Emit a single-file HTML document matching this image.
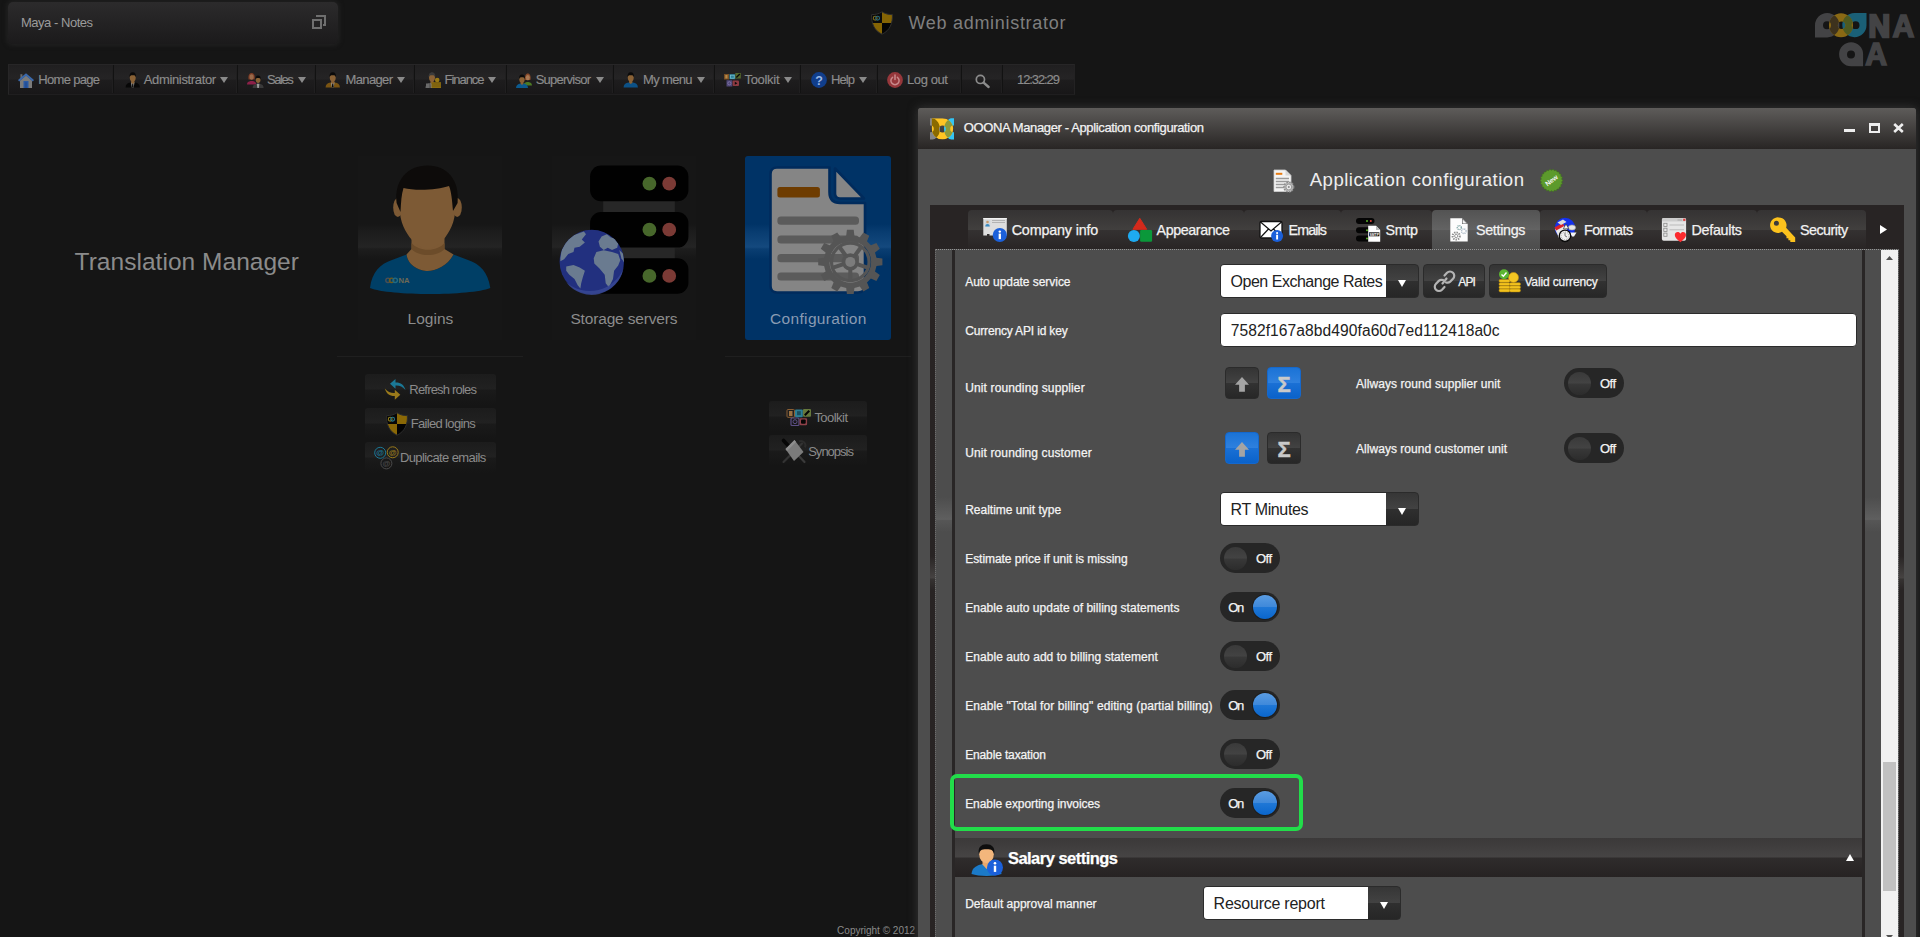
<!DOCTYPE html>
<html lang="en">
<head>
<meta charset="utf-8">
<title>Web administrator</title>
<style>
*{box-sizing:border-box;margin:0;padding:0}
html,body{width:1920px;height:937px;overflow:hidden;background:#151515}
body{font-family:"Liberation Sans",sans-serif;font-size:13px;color:#8f8f8f;position:relative}
.abs{position:absolute}
.t{position:absolute;white-space:nowrap;line-height:1}
.b{-webkit-text-stroke:.25px}
.g{-webkit-text-stroke:.15px}
svg{position:absolute;overflow:visible}
/* top area */
#notes{left:8px;top:2px;width:330px;height:42px;border-radius:5px;background:linear-gradient(#2c2b2c,#1b1a1b);box-shadow:0 0 5px 1px #242424}
#menu{left:8px;top:64px;width:1067px;height:31px;border:1px solid #272627;border-bottom-color:#1f1e1f;border-right-color:#232223;background:linear-gradient(#201f20 0%,#252425 49%,#1e1d1e 51%,#181718 100%)}
.sep{position:absolute;top:65px;width:2px;height:28px;background:linear-gradient(90deg,#201f20 50%,#121212 50%)}
.mi{top:73px;font-size:13px;color:#8d8d8d;letter-spacing:-.45px}
.arr{position:absolute;top:77px;width:0;height:0;border-left:4px solid transparent;border-right:4px solid transparent;border-top:6.5px solid #8a8a8a}
/* dialog */
#dlg{left:918px;top:108px;width:998px;height:840px;background:#4d4d4d;border-radius:3px 3px 0 0;box-shadow:0 0 10px 1px #323232}
#dtitle{left:0;top:0;width:998px;height:41px;border-radius:3px 3px 0 0;background:linear-gradient(#5e5c5a,#282524)}
#tabc{left:930px;top:205px;width:974px;height:740px;background:#282424}
#content{left:935px;top:249px;width:964px;height:700px;background:#4d4d4d;border:1px dotted #6e6e6e;border-top-color:#939393}
</style>
</head>
<body>
<div id="notes" class="abs"></div>
<div class="t" style="left:21.0px;top:16.0px;font-size:13px;color:#9b9b9b;letter-spacing:-0.48px;">Maya - Notes</div>
<svg style="left:312px;top:15px;" width="14" height="14" viewBox="0 0 14 14"><path d="M4 1h9v9h-2" fill="none" stroke="#6f6f6f" stroke-width="2"/><rect x="1" y="5" width="8" height="8" fill="none" stroke="#6f6f6f" stroke-width="2"/></svg>
<svg style="left:870px;top:11px;" width="24" height="24" viewBox="0 0 24 24"><defs><clipPath id="shc"><path d="M12 .8C9 3 5 3.6 1.6 3.6 1.2 12 4 19.5 12 23.2 20 19.5 22.8 12 22.4 3.6 19 3.6 15 3 12 .8z"/></clipPath></defs><g clip-path="url(#shc)"><rect width="12" height="12" fill="#0b0b0b"/><rect x="12" width="12" height="12" fill="#856404"/><rect y="12" width="12" height="12" fill="#856404"/><rect x="12" y="12" width="12" height="12" fill="#050505"/><circle cx="5.2" cy="7.2" r="1.9" fill="none" stroke="#7a6a1a" stroke-width="1.1"/><circle cx="7.6" cy="7.2" r="1.9" fill="none" stroke="#2a6a7a" stroke-width="1.1"/></g><path d="M12 .8C9 3 5 3.6 1.6 3.6 1.2 12 4 19.5 12 23.2 20 19.5 22.8 12 22.4 3.6 19 3.6 15 3 12 .8z" fill="none" stroke="#2e2e2e" stroke-width="1"/></svg>
<div class="t" style="left:908.5px;top:13.6px;font-size:18px;color:#7f7f7f;letter-spacing:0.70px;">Web administrator</div>
<svg style="left:1814.9px;top:12.8px;" width="101" height="54" viewBox="0 0 101 54"><title>OOONA QA</title><defs><clipPath id="lc1"><path d="M12.2 0A12.2 12.2 0 0 1 12.2 24.4H0V12.2A12.2 12.2 0 0 1 12.2 0zM12 8.2a4 4 0 1 0 0 8 4 4 0 0 0 0-8z" clip-rule="evenodd"/></clipPath><clipPath id="lc3"><path d="M39.4 0H51.5V12.2A12.1 12.1 0 1 1 39.4 0zM40.6 8.3a3.9 3.9 0 1 0 0 7.8 3.9 3.9 0 0 0 0-7.8z" clip-rule="evenodd"/></clipPath></defs><path d="M12.2 0A12.2 12.2 0 0 1 12.2 24.4H0V12.2A12.2 12.2 0 0 1 12.2 0zM12 8.2a4 4 0 1 0 0 8 4 4 0 0 0 0-8z" fill="#434345" fill-rule="evenodd"/><path d="M39.4 0H51.5V12.2A12.1 12.1 0 1 1 39.4 0zM40.6 8.3a3.9 3.9 0 1 0 0 7.8 3.9 3.9 0 0 0 0-7.8z" fill="#1a6077" fill-rule="evenodd"/><path d="M26 .2a12 12 0 1 0 0 24 12 12 0 0 0 0-24zM26.6 8.4a3.8 3.8 0 1 1 0 7.6 3.8 3.8 0 0 1 0-7.6z" fill="#8a6914" fill-rule="evenodd"/><path d="M26 .2a12 12 0 1 0 0 24 12 12 0 0 0 0-24zM26.6 8.4a3.8 3.8 0 1 1 0 7.6 3.8 3.8 0 0 1 0-7.6z" fill="#3d321d" fill-rule="evenodd" clip-path="url(#lc1)"/><path d="M26 .2a12 12 0 1 0 0 24 12 12 0 0 0 0-24zM26.6 8.4a3.8 3.8 0 1 1 0 7.6 3.8 3.8 0 0 1 0-7.6z" fill="#4f5a20" fill-rule="evenodd" clip-path="url(#lc3)"/><path d="M36.1 29.2a12 12 0 0 1 12 12V53.2H36.1a12 12 0 0 1 0-24zM36 37.4a4 4 0 1 0 0 8 4 4 0 0 0 0-8z" fill="#434345" fill-rule="evenodd"/><g font-family="Liberation Sans, sans-serif" font-weight="bold" font-size="32" fill="#434345" stroke="#434345" stroke-width="1.7" stroke-linejoin="miter"><text x="53.6" y="23.5" textLength="21.600" lengthAdjust="spacingAndGlyphs" stroke-width="2.600">N</text><text x="77.6" y="23.5" textLength="21.8" lengthAdjust="spacingAndGlyphs">A</text><text x="50.3" y="52.4" textLength="21.8" lengthAdjust="spacingAndGlyphs">A</text></g></svg>
<div id="menu" class="abs"></div>
<div class="sep" style="left:112px"></div>
<div class="sep" style="left:236px"></div>
<div class="sep" style="left:314px"></div>
<div class="sep" style="left:413px"></div>
<div class="sep" style="left:505px"></div>
<div class="sep" style="left:612px"></div>
<div class="sep" style="left:713px"></div>
<div class="sep" style="left:799px"></div>
<div class="sep" style="left:876px"></div>
<div class="sep" style="left:960px"></div>
<div class="sep" style="left:1001px"></div>
<div class="t g" style="left:38.3px;top:73.3px;font-size:13px;color:#8c8c8c;letter-spacing:-0.69px;">Home page</div>
<div class="t g" style="left:143.7px;top:73.3px;font-size:13px;color:#8c8c8c;letter-spacing:-0.34px;">Administrator</div>
<div class="arr" style="left:220px"></div>
<div class="t g" style="left:267.0px;top:73.3px;font-size:13px;color:#8c8c8c;letter-spacing:-1.45px;">Sales</div>
<div class="arr" style="left:298px"></div>
<div class="t g" style="left:345.5px;top:73.3px;font-size:13px;color:#8c8c8c;letter-spacing:-0.63px;">Manager</div>
<div class="arr" style="left:397px"></div>
<div class="t g" style="left:444.5px;top:73.3px;font-size:13px;color:#8c8c8c;letter-spacing:-1.04px;">Finance</div>
<div class="arr" style="left:488px"></div>
<div class="t g" style="left:535.7px;top:73.3px;font-size:13px;color:#8c8c8c;letter-spacing:-0.76px;">Supervisor</div>
<div class="arr" style="left:595.5px"></div>
<div class="t g" style="left:643.0px;top:73.3px;font-size:13px;color:#8c8c8c;letter-spacing:-0.66px;">My menu</div>
<div class="arr" style="left:696.5px"></div>
<div class="t g" style="left:744.5px;top:73.3px;font-size:13px;color:#8c8c8c;letter-spacing:-0.31px;">Toolkit</div>
<div class="arr" style="left:783.5px"></div>
<div class="t g" style="left:831.0px;top:73.3px;font-size:13px;color:#8c8c8c;letter-spacing:-0.91px;">Help</div>
<div class="arr" style="left:859.3px"></div>
<div class="t g" style="left:907.0px;top:73.3px;font-size:13px;color:#8c8c8c;letter-spacing:-0.40px;">Log out</div>
<div class="t g" style="left:1017.0px;top:73.3px;font-size:13px;color:#8c8c8c;letter-spacing:-1.09px;">12:32:29</div>
<svg style="left:18px;top:72.5px;" width="16" height="16" viewBox="0 0 16 16"><rect x="2.4" y="1.2" width="2" height="4" fill="#6a6a6a"/><path d="M2 7.5L8 2.600 14 7.500V15H2z" fill="#7b7b7b"/><path d="M8 .3L16 7 14.800 8.400 8 2.800 1.200 8.400 0 7z" fill="#3a69ad"/><rect x="5.500" y="8" width="5" height="7" fill="#2b5ba6"/><rect x="6.800" y="9.300" width="2.400" height="5.700" fill="#234f98"/></svg>
<svg style="left:124.5px;top:72px;" width="15.5" height="15.5" viewBox="0 0 16 16"><path d="M.6 16c0-3.2 2-4.6 5.2-5.2h4.4c3.2.6 5.2 2 5.2 5.2z" fill="#070707"/><path d="M6.2 10.6h3.6L9 16H7z" fill="#9a9a9a"/><path d="M7.5 11.6h1l.5 4.4h-2z" fill="#111"/><path d="M6.3 8.5h3.4v2.6L8 12.4 6.3 11.1z" fill="#8a6236"/><ellipse cx="8" cy="5.6" rx="3.1" ry="4" fill="#8a6236"/><path d="M4.7 5.6C4.2 2.4 5.6.3 8 .3s3.800 2.100 3.300 5.300C10.800 3.900 10.400 3.300 8 3.300S5.200 3.900 4.700 5.600z" fill="#0a0a0a"/></svg>
<svg style="left:247px;top:72px;" width="16" height="16" viewBox="0 0 16 16"><path d="M0 12.500c0-2.300 1.500-3.200 3.600-3.600h2c2.100.4 3.600 1.300 3.600 3.600z" fill="#8c2048"/><path d="M1.600 7.500C.8 3.500 2.300 1 4.600 1s3.800 2.500 3 6.500z" fill="#7a3a24"/><ellipse cx="4.600" cy="5" rx="2.100" ry="2.800" fill="#9a6a4a"/><path d="M5.600 16c0-2.600 1.600-3.800 4.200-4.200h2.600c2.600.4 4.200 1.600 4.200 4.200z" fill="#3a3a3a"/><path d="M9.800 11.800h2.600L11.900 16h-1.600z" fill="#9a9a9a"/><ellipse cx="11.100" cy="7.800" rx="2.400" ry="3.100" fill="#8a6236"/><path d="M8.500 7.800C8.100 5.200 9.200 3.600 11.100 3.600s3 1.600 2.600 4.200C13.300 6.500 13 6 11.100 6S8.900 6.500 8.500 7.800z" fill="#0a0a0a"/></svg>
<svg style="left:325.3px;top:72px;" width="15.5" height="15.5" viewBox="0 0 16 16"><path d="M.6 16c0-3.2 2-4.6 5.2-5.2h4.4c3.2.6 5.2 2 5.2 5.2z" fill="#7a5412"/><path d="M6.2 10.6h3.6L9 16H7z" fill="#9a9a9a"/><path d="M7.5 11.6h1l.5 4.4h-2z" fill="#0a0a0a"/><path d="M6.3 8.5h3.4v2.6L8 12.4 6.3 11.1z" fill="#8a6236"/><ellipse cx="8" cy="5.6" rx="3.1" ry="4" fill="#8a6236"/><path d="M4.7 5.6C4.2 2.4 5.6.3 8 .3s3.800 2.100 3.300 5.300C10.800 3.900 10.400 3.300 8 3.300S5.200 3.900 4.700 5.600z" fill="#0a0a0a"/></svg>
<svg style="left:424.5px;top:72px;" width="16" height="16" viewBox="0 0 16 16"><path d="M.4 16c0-3 1.800-4.400 4.800-5h3.600c1.500.300 2.500.800 3.200 1.400V16z" fill="#5a5a5a"/><path d="M5.600 10.800h2.800L7.900 16H6.100z" fill="#8a8a8a"/><path d="M5.400 8.300h3.200v2.500L7 12 5.400 10.800z" fill="#8a6236"/><ellipse cx="7" cy="5.400" rx="3" ry="3.900" fill="#8a6236"/><path d="M3.800 5.400C3.300 2.300 4.700.2 7 .2s3.700 2.100 3.200 5.200C9.700 3.800 9.300 3.200 7 3.200s-2.700.6-3.200 2.200z" fill="#3a3a3a"/><rect x="6.500" y="10.200" width="9.500" height="5.800" fill="#8a6c10"/><circle cx="12.200" cy="8" r="2.300" fill="#9a7a14"/><path d="M6.500 12h9.500M6.500 14h9.500" stroke="#6a520a" stroke-width=".6"/><rect x="1" y="11.500" width="3" height="4.500" fill="#6a6a6a"/></svg>
<svg style="left:516px;top:72px;" width="16" height="16" viewBox="0 0 16 16"><path d="M7.500 13.500c0-2.200 1.300-3.200 3.300-3.600h1.800c2 .4 3.400 1.400 3.400 3.600z" fill="#4c7a24"/><path d="M9.200 8C8.500 4.200 9.800 1.600 11.800 1.600s3.400 2.600 2.600 6.400z" fill="#8a4a2a"/><ellipse cx="11.800" cy="5.600" rx="2" ry="2.700" fill="#a87a55"/><path d="M0 16c0-2.800 1.700-4 4.500-4.500h3c2.800.5 4.500 1.700 4.500 4.500z" fill="#0c5a8e"/><path d="M4.600 9.800h2.800v2L6 13 4.600 11.800z" fill="#8a6236"/><ellipse cx="6" cy="7.200" rx="2.700" ry="3.500" fill="#8a6236"/><path d="M3.200 7.200C2.700 4.300 4 2.400 6 2.400s3.300 1.900 2.800 4.800C8.400 5.700 8 5.200 6 5.200s-2.400.5-2.800 2z" fill="#0a0a0a"/></svg>
<svg style="left:622.8px;top:72px;" width="15.5" height="15.5" viewBox="0 0 16 16"><path d="M.6 16c0-3.2 2-4.6 5.2-5.2h4.4c3.2.6 5.2 2 5.2 5.2z" fill="#0c5186"/><path d="M6.3 8.5h3.4v2.6L8 12.4 6.3 11.1z" fill="#8a6236"/><ellipse cx="8" cy="5.6" rx="3.1" ry="4" fill="#8a6236"/><path d="M4.7 5.6C4.2 2.4 5.6.3 8 .3s3.800 2.100 3.300 5.300C10.800 3.900 10.400 3.300 8 3.300S5.200 3.900 4.700 5.600z" fill="#0a0a0a"/></svg>
<svg style="left:724px;top:73px;" width="17" height="14" viewBox="0 0 17 14"><rect x="0" y="1" width="5" height="5.500" fill="#7a4f24"/><rect x="1.300" y="2" width="2.200" height="3.500" fill="#b58a4a"/><rect x="5.400" y="1.200" width="5.800" height="5" fill="#2c7f96"/><rect x="6.400" y="2.200" width="3.800" height="3" fill="none" stroke="#7ac0d0" stroke-width=".7"/><rect x="11.300" y="0" width="5.500" height="5.500" fill="#566a2c"/><path d="M12.300 4.500L15.800 1" stroke="#0a0a0a" stroke-width="1.400"/><rect x="2.500" y="7.200" width="5.800" height="6.300" fill="#4f4676"/><circle cx="5.400" cy="10.300" r="1.600" fill="none" stroke="#8a80b0" stroke-width=".7"/><rect x="8.600" y="7.500" width="6.400" height="5.600" rx="1" fill="#8e3a42"/><path d="M10.800 8.800v3l2.600-1.500z" fill="#0a0a0a"/></svg>
<svg style="left:811px;top:72px;" width="16" height="16" viewBox="0 0 16 16"><circle cx="8" cy="8" r="7.900" fill="#103e8c"/><text x="8" y="12.600" font-family="Liberation Sans, sans-serif" font-weight="bold" font-size="12.500" fill="#9cb8e4" text-anchor="middle">?</text></svg>
<svg style="left:886.8px;top:72px;" width="16" height="16" viewBox="0 0 16 16"><circle cx="8" cy="8" r="7.900" fill="#96373b"/><path d="M5.600 5.300a4.100 4.100 0 1 0 4.800 0" fill="none" stroke="#c98a8c" stroke-width="1.500" stroke-linecap="round"/><path d="M8 3v4.600" stroke="#c98a8c" stroke-width="1.500" stroke-linecap="round"/></svg>
<svg style="left:975.3px;top:74px;" width="15" height="14" viewBox="0 0 15 14"><circle cx="5.400" cy="5.400" r="4.100" fill="none" stroke="#8c8c8c" stroke-width="1.700"/><path d="M8.600 8.600L13.600 13" stroke="#8c8c8c" stroke-width="2.400" stroke-linecap="round"/></svg>
<div class="t" style="left:74.6px;top:250.1px;font-size:24.5px;color:#8b8b8b;letter-spacing:0.03px;">Translation Manager</div>
<div class="abs" style="left:358px;top:156px;width:144px;height:184px;background:linear-gradient(#161616 0%,#161616 37%,#1c1c1c 41%,#242424 49.500%,#1d1d1d 50.500%,#161616 56%,#161616 100%);"></div>
<div class="abs" style="left:552px;top:156px;width:144px;height:184px;background:linear-gradient(#161616 0%,#161616 37%,#1c1c1c 41%,#242424 49.500%,#1d1d1d 50.500%,#161616 56%,#161616 100%);"></div>
<div class="abs" style="left:745px;top:156px;width:146px;height:184px;border-radius:3px;background:linear-gradient(#003366 0%,#003366 37%,#083c70 41%,#14497e 49.500%,#0a3e72 50.500%,#003366 56%,#003366 100%);"></div>
<svg style="left:358px;top:156px;" width="144" height="184" viewBox="358 156 144 184"><path d="M370 288C372 272 380 264 392 260L406.500 254.500C408 266 420 271 427.700 271S447.500 266 453.500 254.500L468 260C480 264 488 272 490.300 288C470 296 390 296 370 288z" fill="#003f66"/><path d="M411.500 236V249L406.500 254.500C408 266 420 271 427.700 271S447.500 266 453.500 254.500L444.500 249V236z" fill="#7d5a35"/><path d="M411.500 243C419 252 437 252 444.500 243V249C437 257 419 257 411.500 249z" fill="#6c4c2a"/><ellipse cx="397.800" cy="207.500" rx="4.600" ry="9.500" fill="#7d5a35"/><ellipse cx="457.200" cy="207.500" rx="4.600" ry="9.500" fill="#7d5a35"/><path d="M400 186C400 176 455 176 455 186L455.500 208C455 222 450 232 443 240C438 246 432 249 427.700 249S417 246 412 240C405 232 400 222 399.500 208z" fill="#7d5a35"/><path d="M400.500 212L396.600 203C394 180 408 165.600 427.500 165.600S460 180 457.600 203L453 211C452 200 451.500 192 449 186C438 190 415 191 403.500 188C401.500 194 401 202 400.500 212z" fill="#0d0b0a"/><g font-family="Liberation Sans, sans-serif" font-weight="bold" font-size="6.500"><text x="398.500" y="283.200" fill="#6f6a55" textLength="11" lengthAdjust="spacingAndGlyphs">NA</text></g><circle cx="388" cy="280.300" r="2.200" fill="none" stroke="#4a4f55" stroke-width="1.400"/><circle cx="391.600" cy="280.300" r="2.200" fill="none" stroke="#6f5a1a" stroke-width="1.400"/><circle cx="395.200" cy="280.300" r="2.200" fill="none" stroke="#1f6a86" stroke-width="1.400"/></svg>
<div class="t" style="left:407.6px;top:310.8px;font-size:15.5px;color:#8c8c8c;letter-spacing:0.02px;">Logins</div>
<svg style="left:552px;top:156px;" width="144" height="184" viewBox="552 156 144 184"><rect x="603.200" y="200" width="71.600" height="13" fill="#272727"/><rect x="603.200" y="246.4" width="71.600" height="13" fill="#272727"/><rect x="590.100" y="165.6" width="98.300" height="35.600" rx="11" fill="#010101"/><circle cx="649.400" cy="183.7" r="6.900" fill="#47672b"/><circle cx="669.200" cy="183.7" r="6.900" fill="#7b3a35"/><rect x="590.100" y="212" width="98.300" height="35.600" rx="11" fill="#010101"/><circle cx="649.400" cy="229.7" r="6.900" fill="#47672b"/><circle cx="669.200" cy="229.7" r="6.900" fill="#7b3a35"/><rect x="590.100" y="258.2" width="98.300" height="35.600" rx="11" fill="#010101"/><circle cx="649.400" cy="275.9" r="6.900" fill="#47672b"/><circle cx="669.200" cy="275.9" r="6.900" fill="#7b3a35"/><defs><clipPath id="glc"><circle cx="591.800" cy="261.900" r="32.200"/></clipPath></defs><circle cx="591.800" cy="261.900" r="32.200" fill="#22307f"/><g clip-path="url(#glc)" fill="#6a7b90"><path d="M560.4 258.2L561.6 249.9L566.2 241.6L573.5 235.3L583.9 231.6L586 234.3L581.8 239.5L584.9 242.6L579.7 246.8L574.5 247.8L573.5 252L568.3 254L564.1 259.2L560.4 261.3z"/><path d="M566.2 266.5L573.5 264.9L579.7 267.6L584.9 270.7L582.9 276.9L581.2 283.2L580.4 288.4L577.7 285.2L574.5 279L569.3 274.8L566.2 270.7z"/><path d="M598.5 241.6L601.6 236.4L606.8 234.3L610.9 237.4L615.1 238.4L618.2 243.6L617.2 247.8L612 249.9L607.8 247.8L603.7 249.9L599.9 246.8z"/><path d="M593.7 258.2L596.4 252L603.7 250.3L612 252L618.2 254L620.3 260.3L618.2 265.5L614.1 270.7L613 279L608.9 287.3L605.7 283.2L604.7 274.8L599.5 268.6L594.3 263.4z"/><path d="M619.3 249.9L623.4 254L624.1 262.4L621.4 258.2z"/></g><path d="M566 282A32.200 32.200 0 0 0 623.500 268 36 36 0 0 1 566 282z" fill="#3a4a96" opacity=".8"/></svg>
<div class="t" style="left:570.4px;top:310.8px;font-size:15.5px;color:#8c8c8c;letter-spacing:-0.16px;">Storage servers</div>
<svg style="left:745px;top:156px;" width="146" height="184" viewBox="745 156 146 184"><path d="M777 167.500H829.500V192C829.500 199 833 203 840 203H865V286C865 290 862 292.500 858 292.500H777C773 292.500 770.500 290 770.500 286V174C770.500 170 773 167.500 777 167.500z" fill="#858585" stroke="#002b5c" stroke-width="2.600" stroke-linejoin="round"/><path d="M835 168.500L864 198.500H840C837 198.500 835 196.500 835 193.500z" fill="#858585" stroke="#002b5c" stroke-width="2.600" stroke-linejoin="round"/><rect x="777.400" y="187" width="42.500" height="10.400" rx="2.500" fill="#6e3c00"/><rect x="777.400" y="216.6" width="81.600" height="8.200" rx="3.500" fill="#5b5b5b"/><rect x="777.400" y="235.4" width="81.600" height="8.200" rx="3.500" fill="#5b5b5b"/><rect x="777.400" y="254.1" width="81.600" height="8.200" rx="3.500" fill="#5b5b5b"/><rect x="777.400" y="272.4" width="81.600" height="8.200" rx="3.500" fill="#5b5b5b"/><path d="M876.5 257.8L882.4 258.5L882.4 265.3L876.5 266.0L875.0 271.4L879.8 275.0L876.4 280.9L870.9 278.6L867.0 282.5L869.3 288.0L863.4 291.4L859.8 286.6L854.4 288.1L853.7 294.0L846.9 294.0L846.2 288.1L840.8 286.6L837.2 291.4L831.3 288.0L833.6 282.5L829.7 278.6L824.2 280.9L820.8 275.0L825.6 271.4L824.1 266.0L818.2 265.3L818.2 258.5L824.1 257.8L825.6 252.4L820.8 248.8L824.2 242.9L829.7 245.2L833.6 241.3L831.3 235.8L837.2 232.4L840.8 237.2L846.2 235.7L846.9 229.8L853.7 229.8L854.4 235.7L859.8 237.2L863.4 232.4L869.3 235.8L867.0 241.3L870.9 245.2L876.4 242.9L879.8 248.8L875.0 252.4zM871.100 261.900A20.800 20.800 0 1 0 829.500 261.900 20.800 20.800 0 1 0 871.100 261.900z" fill="#555555" fill-rule="evenodd"/><circle cx="850.300" cy="261.900" r="18.800" fill="none" stroke="#555555" stroke-width="3.200"/><path d="M850.300 261.900L861.5 246.5" stroke="#555555" stroke-width="4"/><path d="M850.300 261.900L868.4 267.8" stroke="#555555" stroke-width="4"/><path d="M850.300 261.900L850.3 280.9" stroke="#555555" stroke-width="4"/><path d="M850.300 261.900L832.2 267.8" stroke="#555555" stroke-width="4"/><path d="M850.300 261.900L839.1 246.5" stroke="#555555" stroke-width="4"/><circle cx="850.300" cy="261.900" r="8.600" fill="#555555"/><circle cx="850.300" cy="261.900" r="5" fill="#7c7c7c"/></svg>
<div class="t" style="left:770.0px;top:310.8px;font-size:15.5px;color:#8a9bb3;letter-spacing:0.34px;">Configuration</div>
<div class="abs" style="left:337px;top:356px;width:186px;height:1px;background:#1f1f1f"></div>
<div class="abs" style="left:725px;top:356px;width:186px;height:1px;background:#1f1f1f"></div>
<div class="abs" style="left:365px;top:374px;width:131px;height:31px;border-radius:3px;background:linear-gradient(#1c1c1c 0%,#212121 48%,#1a1a1a 52%,#151515 100%);"></div>
<div class="abs" style="left:365px;top:408px;width:131px;height:31px;border-radius:3px;background:linear-gradient(#1c1c1c 0%,#212121 48%,#1a1a1a 52%,#151515 100%);"></div>
<div class="abs" style="left:365px;top:442px;width:131px;height:31px;border-radius:3px;background:linear-gradient(#1c1c1c 0%,#212121 48%,#1a1a1a 52%,#151515 100%);"></div>
<div class="abs" style="left:769px;top:401px;width:98px;height:31px;border-radius:3px;background:linear-gradient(#1c1c1c 0%,#212121 48%,#1a1a1a 52%,#151515 100%);"></div>
<div class="abs" style="left:769px;top:435px;width:98px;height:31px;border-radius:3px;background:linear-gradient(#1c1c1c 0%,#212121 48%,#1a1a1a 52%,#151515 100%);"></div>
<div class="t" style="left:409.3px;top:382.7px;font-size:13px;color:#8b8b8b;letter-spacing:-0.80px;">Refresh roles</div>
<div class="t" style="left:410.7px;top:416.9px;font-size:13px;color:#8b8b8b;letter-spacing:-0.66px;">Failed logins</div>
<div class="t" style="left:399.9px;top:450.7px;font-size:13px;color:#8b8b8b;letter-spacing:-0.60px;">Duplicate emails</div>
<div class="t" style="left:814.4px;top:411.1px;font-size:13px;color:#8b8b8b;letter-spacing:-0.54px;">Toolkit</div>
<div class="t" style="left:808.2px;top:445.0px;font-size:13px;color:#8b8b8b;letter-spacing:-0.99px;">Synopsis</div>
<svg style="left:383.6px;top:378.4px;" width="23" height="23" viewBox="0 0 23 23"><path d="M21.500 12C20 6.500 16 4.200 11.500 4.500V1L6 5.800 11.500 10.800V7.500C15.500 7.300 18.500 8.500 21.500 12z" fill="#1b7896"/><path d="M.8 10.500C2.300 16 6.300 18.300 10.800 18V21.800L16.300 16.700 10.800 11.700V15C6.800 15.200 3.800 14 .8 10.500z" fill="#9a7a1b"/></svg>
<svg style="left:384.5px;top:412px;" width="24" height="24" viewBox="0 0 24 24"><defs><clipPath id="shc2"><path d="M12 .8C9 3 5 3.600 1.600 3.600 1.200 12 4 19.500 12 23.200 20 19.500 22.800 12 22.400 3.600 19 3.600 15 3 12 .8z"/></clipPath></defs><g clip-path="url(#shc2)"><rect width="12" height="12" fill="#070707"/><rect x="12" width="12" height="12" fill="#8a6806"/><rect y="12" width="12" height="12" fill="#8a6806"/><rect x="12" y="12" width="12" height="12" fill="#030303"/><circle cx="5.200" cy="7.200" r="1.900" fill="none" stroke="#8a7a1a" stroke-width="1.100"/><circle cx="7.600" cy="7.200" r="1.900" fill="none" stroke="#2a7a8a" stroke-width="1.100"/></g><path d="M12 .8C9 3 5 3.600 1.600 3.600 1.200 12 4 19.500 12 23.200 20 19.500 22.800 12 22.400 3.600 19 3.600 15 3 12 .8z" fill="none" stroke="#2c2c2c" stroke-width="1"/></svg>
<svg style="left:373.5px;top:446px;" width="25" height="24" viewBox="0 0 25 24"><circle cx="6.2" cy="6.8" r="5.500" fill="none" stroke="#1b7896" stroke-width="1"/><text x="6.2" y="9.4" font-family="Liberation Sans, sans-serif" font-size="8" font-weight="bold" fill="#1b7896" text-anchor="middle">@</text><circle cx="18.7" cy="6.3" r="5.500" fill="none" stroke="#9a7a1b" stroke-width="1"/><text x="18.7" y="8.9" font-family="Liberation Sans, sans-serif" font-size="8" font-weight="bold" fill="#9a7a1b" text-anchor="middle">@</text><circle cx="12.4" cy="17.4" r="5.500" fill="none" stroke="#4a4a4a" stroke-width="1"/><text x="12.4" y="20.0" font-family="Liberation Sans, sans-serif" font-size="8" font-weight="bold" fill="#4a4a4a" text-anchor="middle">@</text></svg>
<svg style="left:787px;top:408.8px;" width="24" height="17" viewBox="0 0 24 17"><rect x="0" y=".5" width="7.500" height="7.800" rx="1" fill="none" stroke="#8a5f34" stroke-width="1"/><rect x="2" y="2" width="3.500" height="5" fill="#9a7040"/><rect x="8" y=".5" width="7.800" height="7.800" rx="1" fill="#2c7f96"/><rect x="10" y="2.200" width="3.800" height="4" fill="#1a4f60"/><rect x="16" y="0" width="8" height="7.800" rx="1" fill="#66783c"/><path d="M17.800 6.200L22.300 1.700" stroke="#050505" stroke-width="2"/><rect x="4" y="9" width="8" height="7.500" rx="1" fill="none" stroke="#5c4f86" stroke-width="1.200"/><circle cx="8" cy="12.700" r="2" fill="none" stroke="#5c4f86" stroke-width="1"/><rect x="12.600" y="9.200" width="7.500" height="7" rx="1.200" fill="#8e4048"/><rect x="14" y="10.600" width="4.700" height="4.200" rx="1" fill="#050505"/></svg>
<svg style="left:782px;top:438.7px;" width="25" height="24" viewBox="0 0 25 24"><path d="M1.500 23L20 4.500" stroke="#333" stroke-width="2.200" stroke-linecap="round"/><path d="M17 2.500A4.500 4.500 0 0 1 23 8.500" fill="none" stroke="#2c2c2c" stroke-width="2"/><path d="M22.500 23L14 14" stroke="#3a3a3a" stroke-width="2.200" stroke-linecap="round"/><path d="M1.500 1.500L7 7.500" stroke="#060606" stroke-width="3.600" stroke-linecap="round"/><path d="M3.500 10L12.500 1 21.500 13 12 22z" fill="#7b7b7b"/><path d="M3.500 10L12.500 1 14 3 5 12z" fill="#8e8e8e"/></svg>
<div class="t" style="left:837.1px;top:925.5px;font-size:10px;color:#8a8a8a;letter-spacing:-0.00px;">Copyright © 2012</div>
<div id="dlg" class="abs"><div id="dtitle" class="abs"></div></div>
<svg style="left:930px;top:117.5px;" width="24" height="21.5" viewBox="0 0 24 21.500"><defs><clipPath id="tic"><rect y=".3" width="24" height="21.200"/></clipPath><clipPath id="tiy"><path d="M1.900 .3H12.400A10.600 10.600 0 1 1 1.900 10.900zM12.500 7.400a3.500 3.500 0 1 0 0 7 3.500 3.500 0 0 0 0-7z" clip-rule="evenodd"/></clipPath></defs><g clip-path="url(#tic)"><path d="M-2 -1.100A12 12 0 1 1 -2 22.900 12 12 0 1 1 -2 -1.100zM.5 7.600a3.300 3.300 0 1 0 0 6.600 3.300 3.300 0 0 0 0-6.600z" fill="#84868a" fill-rule="evenodd"/><path d="M26 -1.100A12 12 0 1 1 26 22.900 12 12 0 1 1 26 -1.100zM23.500 7.600a3.300 3.300 0 1 0 0 6.600 3.300 3.300 0 0 0 0-6.600z" fill="#33c5f5" fill-rule="evenodd"/><path d="M1.900 .3H12.400A10.600 10.600 0 1 1 1.900 10.900zM12.500 7.400a3.500 3.500 0 1 0 0 7 3.500 3.500 0 0 0 0-7z" fill="#ffc524" fill-rule="evenodd"/><g clip-path="url(#tiy)"><path d="M-2 -1.100A12 12 0 1 1 -2 22.900 12 12 0 1 1 -2 -1.100zM.5 7.600a3.300 3.300 0 1 0 0 6.600 3.300 3.300 0 0 0 0-6.600z" fill="#8a6a00" fill-rule="evenodd"/><path d="M26 -1.100A12 12 0 1 1 26 22.900 12 12 0 1 1 26 -1.100zM23.500 7.600a3.300 3.300 0 1 0 0 6.600 3.300 3.300 0 0 0 0-6.600z" fill="#8d9b3c" fill-rule="evenodd"/></g></g></svg>
<div class="t b" style="left:963.7px;top:120.9px;font-size:13px;color:#f2f2f2;letter-spacing:-0.37px;">OOONA Manager - Application configuration</div>
<div class="abs" style="left:1844px;top:129px;width:11px;height:3px;background:#eee"></div>
<div class="abs" style="left:1869px;top:123px;width:11px;height:10px;border:2px solid #eee;border-top-width:3px"></div>
<svg style="left:1892.5px;top:123.3px;" width="11" height="10" viewBox="0 0 11 10"><path d="M1.200 1L9.800 9M9.800 1L1.200 9" stroke="#eee" stroke-width="2.600"/></svg>
<svg style="left:1273px;top:169.2px;" width="22" height="24" viewBox="0 0 22 24"><path d="M1 1H12.500L18 6.500V22.500H1z" fill="#f4f4f4" stroke="#cfcfcf" stroke-width=".8"/><path d="M12.500 1V6.500H18z" fill="#d8d8d8"/><rect x="2.800" y="3.800" width="6.500" height="2" fill="#e77c13"/><path d="M2.800 9.500H16M2.800 12.500H16M2.800 15.500H12M2.800 18.500H11" stroke="#9a9a9a" stroke-width="1.300"/><circle cx="15.800" cy="18" r="4.800" fill="#b9b9b9" stroke="#8e8e8e" stroke-width="1.600" stroke-dasharray="1.600 1.200"/><circle cx="15.800" cy="18" r="2.900" fill="#e8e8e8" stroke="#8a8a8a" stroke-width=".8"/><circle cx="15.800" cy="18" r="1" fill="#8a8a8a"/></svg>
<div class="t" style="left:1309.7px;top:171.2px;font-size:18.6px;color:#eeeeee;letter-spacing:0.49px;">Application configuration</div>
<svg style="left:1539.8px;top:169.3px;" width="23" height="23" viewBox="0 0 23 23"><path d="M22.90 11.50L21.60 12.95L22.44 14.71L20.78 15.74L21.09 17.66L19.21 18.18L18.97 20.12L17.01 20.08L16.24 21.87L14.37 21.29L13.12 22.78L11.50 21.70L9.88 22.78L8.63 21.29L6.76 21.87L5.99 20.08L4.03 20.12L3.79 18.18L1.91 17.66L2.22 15.74L0.56 14.71L1.40 12.95L0.10 11.50L1.40 10.05L0.56 8.29L2.22 7.26L1.91 5.34L3.79 4.82L4.03 2.88L5.99 2.92L6.76 1.13L8.63 1.71L9.88 0.22L11.50 1.30L13.12 0.22L14.37 1.71L16.24 1.13L17.01 2.92L18.97 2.88L19.21 4.82L21.09 5.34L20.78 7.26L22.44 8.29L21.60 10.05z" fill="#5c9a2c" stroke="#3f6f1c" stroke-width=".6"/><text x="11.500" y="13.800" transform="rotate(-38 11.500 11.500)" font-family="Liberation Sans, sans-serif" font-weight="bold" font-size="6.800" fill="#f4f4f4" text-anchor="middle">New</text></svg>
<div id="tabc" class="abs"></div>
<div class="abs" style="left:968px;top:210px;width:145px;height:39px;border-radius:4px 4px 0 0;background:linear-gradient(#353333 0%,#413f3e 50%,#343131 52%,#292525 100%);"></div>
<div class="abs" style="left:1113px;top:210px;width:131px;height:39px;border-radius:4px 4px 0 0;background:linear-gradient(#353333 0%,#413f3e 50%,#343131 52%,#292525 100%);"></div>
<div class="abs" style="left:1244px;top:210px;width:97px;height:39px;border-radius:4px 4px 0 0;background:linear-gradient(#353333 0%,#413f3e 50%,#343131 52%,#292525 100%);"></div>
<div class="abs" style="left:1341px;top:210px;width:91px;height:39px;border-radius:4px 4px 0 0;background:linear-gradient(#353333 0%,#413f3e 50%,#343131 52%,#292525 100%);"></div>
<div class="abs" style="left:1432px;top:210px;width:108px;height:39px;border-radius:4px 4px 0 0;background:linear-gradient(#535353 0%,#636363 50%,#585858 52%,#4d4d4d 100%);"></div>
<div class="abs" style="left:1540px;top:210px;width:107px;height:39px;border-radius:4px 4px 0 0;background:linear-gradient(#353333 0%,#413f3e 50%,#343131 52%,#292525 100%);"></div>
<div class="abs" style="left:1647px;top:210px;width:110px;height:39px;border-radius:4px 4px 0 0;background:linear-gradient(#353333 0%,#413f3e 50%,#343131 52%,#292525 100%);"></div>
<div class="abs" style="left:1757px;top:210px;width:109px;height:39px;border-radius:4px 4px 0 0;background:linear-gradient(#353333 0%,#413f3e 50%,#343131 52%,#292525 100%);"></div>
<div id="content" class="abs"></div>
<div class="t b" style="left:1011.7px;top:222.7px;font-size:14.3px;color:#f2f2f2;letter-spacing:-0.15px;">Company info</div>
<div class="t b" style="left:1156.5px;top:222.7px;font-size:14.3px;color:#f2f2f2;letter-spacing:-0.40px;">Appearance</div>
<div class="t b" style="left:1288.5px;top:222.7px;font-size:14.3px;color:#f2f2f2;letter-spacing:-0.88px;">Emails</div>
<div class="t b" style="left:1385.4px;top:222.7px;font-size:14.3px;color:#f2f2f2;letter-spacing:-0.26px;">Smtp</div>
<div class="t b" style="left:1476.0px;top:222.7px;font-size:14.3px;color:#f2f2f2;letter-spacing:-0.31px;">Settings</div>
<div class="t b" style="left:1584.0px;top:222.7px;font-size:14.3px;color:#f2f2f2;letter-spacing:-0.56px;">Formats</div>
<div class="t b" style="left:1691.5px;top:222.7px;font-size:14.3px;color:#f2f2f2;letter-spacing:-0.28px;">Defaults</div>
<div class="t b" style="left:1799.9px;top:222.7px;font-size:14.3px;color:#f2f2f2;letter-spacing:-0.48px;">Security</div>
<svg style="left:1879.5px;top:225px;" width="7" height="9" viewBox="0 0 7 9"><path d="M0 0L7 4.500 0 9z" fill="#fff"/></svg>
<svg style="left:983px;top:218px;" width="25" height="25" viewBox="983 218 25 25"><path d="M983.300 218.100H1006.800V235.500H989.500V234H987V235.500H983.300z" fill="#dedede"/><rect x="983.300" y="218.100" width="23.500" height="1" fill="#f4f4f4"/><rect x="984.800" y="220" width="5.500" height="7" fill="#cfd6dc"/><circle cx="987.500" cy="222" r="1.300" fill="#c79a6a"/><path d="M985.300 226.500c0-2 1-2.600 2.200-2.600s2.200.6 2.200 2.600z" fill="#3a8ac0"/><path d="M992 220.500H1005M992 222.500H1005" stroke="#a8a8a8" stroke-width=".8"/><circle cx="999.8" cy="235" r="7.1" fill="#1b60da"/><circle cx="999.8" cy="231.59" r="1.21" fill="#fff"/><rect x="998.66" y="233.58" width="2.27" height="5.54" fill="#fff"/></svg>
<svg style="left:1127px;top:218px;" width="26" height="25" viewBox="1127 218 26 25"><path d="M1139.800 218.300L1146.700 229.300H1132.900z" fill="#d42a1c" stroke="#d42a1c" stroke-width="1" stroke-linejoin="round"/><circle cx="1133.900" cy="236" r="6" fill="#1eaaf1"/><rect x="1140.100" y="230" width="12" height="11.800" rx="1.200" fill="#0a983a"/></svg>
<svg style="left:1259px;top:220px;" width="25" height="23" viewBox="1259 220 25 23"><rect x="1260" y="221.500" width="22" height="16.500" rx="1.500" fill="#fff" stroke="#111" stroke-width="1.300"/><path d="M1260.500 222L1271 231 1281.500 222M1260.500 237.500L1268.500 229M1281.500 237.500L1273.500 229" fill="none" stroke="#111" stroke-width="1.200"/><circle cx="1277.1" cy="236" r="6" fill="#1b60da"/><circle cx="1277.1" cy="233.12" r="1.02" fill="#fff"/><rect x="1276.14" y="234.80" width="1.92" height="4.68" fill="#fff"/></svg>
<svg style="left:1356px;top:218px;" width="25" height="24" viewBox="1356 218 25 24"><rect x="1356" y="218.1" width="18.500" height="6" rx="3" fill="#050505"/><circle cx="1367" cy="221.1" r="1" fill="#5ab02a"/><rect x="1356" y="227.2" width="18.500" height="6" rx="3" fill="#050505"/><circle cx="1367" cy="230.2" r="1" fill="#5ab02a"/><rect x="1356" y="235.6" width="18.500" height="6" rx="3" fill="#050505"/><circle cx="1367" cy="238.6" r="1" fill="#5ab02a"/><circle cx="1370.800" cy="221.100" r="1" fill="#e0463a"/><path d="M1368.200 225.800H1376L1380.200 230V241.800H1368.200z" fill="#fff"/><path d="M1376 225.800V230H1380.200z" fill="#bdbdbd"/><rect x="1369" y="232.300" width="10.400" height="4" fill="#111"/><text x="1369.500" y="235.700" font-family="Liberation Sans, sans-serif" font-weight="bold" font-size="3.600" fill="#fff" textLength="9.400" lengthAdjust="spacingAndGlyphs">SMTP</text></svg>
<svg style="left:1450px;top:218px;" width="18" height="24" viewBox="1450 218 18 24"><path d="M1450.300 218.300H1462L1467.700 224V241.600H1450.300z" fill="#fdfdfd"/><path d="M1462 218.300V224H1467.700z" fill="#5d5d5d"/><path d="M1462.600 219.200L1466.800 223.400H1462.600z" fill="#f4f4f4"/><circle cx="1456.200" cy="236" r="3.600" fill="none" stroke="#8d8d8d" stroke-width="2" stroke-dasharray="1.400 1"/><circle cx="1456.200" cy="236" r="1.600" fill="none" stroke="#8d8d8d" stroke-width=".9"/><circle cx="1459.300" cy="227.600" r="2" fill="none" stroke="#7fa3a3" stroke-width="1.400" stroke-dasharray="1 .7"/><circle cx="1463.800" cy="231.200" r="2.300" fill="none" stroke="#a9b7c4" stroke-width="1.400" stroke-dasharray="1 .7"/></svg>
<svg style="left:1553px;top:217px;" width="25" height="25" viewBox="1553 217 25 25"><circle cx="1565" cy="228" r="10.200" fill="#1431ee"/><path d="M1555 229L1563 224.500 1568.500 231.500 1559 238z" fill="#e9e9e9"/><path d="M1554.500 227.500L1562.500 223 1564.300 226 1556.200 230.600z" fill="#d8232a"/><path d="M1557.500 222.500L1563 219.500 1566.500 222 1561 225z" fill="#dcdcdc"/><ellipse cx="1572" cy="227.500" rx="3.600" ry="2.600" fill="#e6e6e6" stroke="#9a9a9a" stroke-width=".6"/><path d="M1569.500 232.500H1576.500L1574 236.500H1572z" fill="#f4f4f4"/><path d="M1566 224L1568.800 228.800H1563.300z" fill="#f4f4f4" stroke="#222" stroke-width=".6"/><circle cx="1565" cy="235.800" r="5.700" fill="#efefef" stroke="#0a0a0a" stroke-width="1.300"/><circle cx="1565" cy="235.800" r="3.900" fill="none" stroke="#9a9a9a" stroke-width="1" stroke-dasharray=".8 1.200"/><path d="M1565 232.500V235.800L1567 237" fill="none" stroke="#555" stroke-width=".8"/></svg>
<svg style="left:1661px;top:217px;" width="27" height="26" viewBox="1661 217 27 26"><rect x="1661.900" y="218.100" width="24.200" height="22.600" rx="1.800" fill="#e6e6e6"/><rect x="1661.900" y="218.100" width="24.200" height="3.400" rx="1.500" fill="#cdcdcd"/><rect x="1683.200" y="218.700" width="2.200" height="2.200" fill="#e03a3a"/><path d="M1677.500 220H1682" stroke="#9a9a9a" stroke-width=".7"/><rect x="1663.800" y="223.300" width="3.200" height="3.200" fill="none" stroke="#8a8a8a" stroke-width=".8"/><rect x="1663.800" y="228.200" width="3.200" height="3.200" fill="none" stroke="#8a8a8a" stroke-width=".8"/><rect x="1663.800" y="233.100" width="3.200" height="3.200" fill="none" stroke="#8a8a8a" stroke-width=".8"/><path d="M1669.500 225H1684M1669.500 229.800H1684" stroke="#b5b5b5" stroke-width=".9"/><path d="M1680.400 242.200C1676.500 239 1674.800 237 1674.800 234.900 1674.800 233.100 1676.200 232 1677.700 232 1678.900 232 1679.900 232.700 1680.400 233.700 1680.900 232.700 1681.900 232 1683.100 232 1684.600 232 1686 233.100 1686 234.900 1686 237 1684.300 239 1680.400 242.200z" fill="#fb2a2e"/></svg>
<svg style="left:1770px;top:217px;" width="26" height="26" viewBox="1770 217 26 26"><path d="M1778.700 217.400A7.800 7.800 0 0 1 1786.100 227.800L1795.200 237.500V242H1790.300V240.200H1788.400V238.200H1786.500V236.300L1782 231.800A7.800 7.800 0 1 1 1778.700 217.400zM1776.400 220.800a2.500 2.500 0 1 0 0 5 2.500 2.500 0 0 0 0-5z" fill="#fcc21d" fill-rule="evenodd"/></svg>
<div class="abs" style="left:936px;top:497px;width:945px;height:35px;background:linear-gradient(#4d4d4d 0%,#5f5f5f 64%,#565656 67%,#4d4d4d 100%);"></div>
<div class="abs" style="left:930px;top:556px;width:5px;height:34px;background:linear-gradient(#282424 0%,#464342 65%,#363332 67%,#282424 100%);"></div>
<div class="abs" style="left:1899px;top:556px;width:5px;height:34px;background:linear-gradient(#282424 0%,#464342 65%,#363332 67%,#282424 100%);"></div>
<div class="abs" style="left:952px;top:250px;width:913px;height:695px;background:#4d4d4d;border-left:3px solid #292626;border-right:3px solid #292626;"></div>
<div class="abs" style="left:1881px;top:250px;width:17px;height:690px;background:#f1f1f1;"></div>
<div class="abs" style="left:1883px;top:762px;width:13px;height:129px;background:#c1c1c1;"></div>
<svg style="left:1886px;top:255.5px;" width="7" height="4" viewBox="0 0 7 4"><path d="M0 4L3.500 0 7 4z" fill="#505050"/></svg>
<svg style="left:1886px;top:935px;" width="7" height="4" viewBox="0 0 7 4"><path d="M0 0H7L3.500 4z" fill="#505050"/></svg>
<div class="t b" style="left:965.2px;top:276.0px;font-size:12px;color:#f4f4f4;letter-spacing:-0.04px;">Auto update service</div>
<div class="t b" style="left:965.2px;top:325.0px;font-size:12px;color:#f4f4f4;letter-spacing:-0.16px;">Currency API id key</div>
<div class="t b" style="left:965.2px;top:382.0px;font-size:12px;color:#f4f4f4;letter-spacing:0.13px;">Unit rounding supplier</div>
<div class="t b" style="left:965.2px;top:446.8px;font-size:12px;color:#f4f4f4;letter-spacing:0.12px;">Unit rounding customer</div>
<div class="t b" style="left:965.2px;top:504.0px;font-size:12px;color:#f4f4f4;letter-spacing:-0.01px;">Realtime unit type</div>
<div class="t b" style="left:965.2px;top:553.0px;font-size:12px;color:#f4f4f4;letter-spacing:-0.05px;">Estimate price if unit is missing</div>
<div class="t b" style="left:965.2px;top:602.0px;font-size:12px;color:#f4f4f4;letter-spacing:0.02px;">Enable auto update of billing statements</div>
<div class="t b" style="left:965.2px;top:651.0px;font-size:12px;color:#f4f4f4;letter-spacing:0.05px;">Enable auto add to billing statement</div>
<div class="t b" style="left:965.2px;top:700.0px;font-size:12px;color:#f4f4f4;letter-spacing:0.09px;">Enable "Total for billing" editing (partial billing)</div>
<div class="t b" style="left:965.2px;top:749.0px;font-size:12px;color:#f4f4f4;letter-spacing:-0.14px;">Enable taxation</div>
<div class="t b" style="left:965.2px;top:798.0px;font-size:12px;color:#f4f4f4;letter-spacing:-0.08px;">Enable exporting invoices</div>
<div class="t b" style="left:965.2px;top:898.0px;font-size:12px;color:#f4f4f4;letter-spacing:-0.00px;">Default approval manner</div>
<div class="t b" style="left:1356.0px;top:377.8px;font-size:12px;color:#f4f4f4;letter-spacing:0.06px;">Allways round supplier unit</div>
<div class="t b" style="left:1356.0px;top:442.8px;font-size:12px;color:#f4f4f4;letter-spacing:0.04px;">Allways round customer unit</div>
<div class="abs" style="left:1220px;top:264px;width:199px;height:34px;border:1px solid #2b2b2b;border-radius:4px;background:linear-gradient(#363636 0%,#424242 49%,#2f2f2f 51%,#262626 100%);"></div><div class="abs" style="left:1221px;top:265px;width:165px;height:32px;border-radius:3px 0 0 3px;background:#fff;"></div><div class="t" style="left:1230.6px;top:273.5px;font-size:16px;color:#222;letter-spacing:-0.49px;">Open Exchange Rates</div><svg style="left:1397.5px;top:279.5px;" width="8" height="7" viewBox="0 0 8 7"><path d="M0 0H8L4 7z" fill="#fff"/></svg>
<div class="abs" style="left:1423px;top:264px;width:62px;height:34px;border:1px solid #2b2b2b;border-radius:4px;background:linear-gradient(#343434 0%,#424242 49%,#323232 51%,#272727 100%);"></div>
<svg style="left:1432px;top:269px;" width="24" height="24" viewBox="0 0 24 24"><g fill="none" stroke="#b4b4b4" stroke-width="2.200" stroke-linecap="round"><path d="M10.500 14.500L14.500 9.500"/><path d="M12.500 6.500L15 3.800a4.200 4.200 0 0 1 6 6L18.200 12.600a4 4 0 0 1-4.200.8"/><path d="M12.500 18L10 20.700a4.200 4.200 0 0 1-6-6L6.800 11.900a4 4 0 0 1 4.200-.8"/></g></svg>
<div class="t b" style="left:1458.3px;top:276.0px;font-size:12px;color:#f4f4f4;letter-spacing:-0.92px;">API</div>
<div class="abs" style="left:1489px;top:264px;width:118px;height:34px;border:1px solid #2b2b2b;border-radius:4px;background:linear-gradient(#343434 0%,#424242 49%,#323232 51%,#272727 100%);"></div>
<svg style="left:1498px;top:269px;" width="24" height="25" viewBox="1498 269 24 25"><rect x="1499" y="289.1" width="11" height="2.800" rx="1.300" fill="#f2c21e" stroke="#b98a0a" stroke-width=".5"/><rect x="1499" y="285.90000000000003" width="11" height="2.800" rx="1.300" fill="#f2c21e" stroke="#b98a0a" stroke-width=".5"/><rect x="1499" y="282.70000000000005" width="11" height="2.800" rx="1.300" fill="#f2c21e" stroke="#b98a0a" stroke-width=".5"/><rect x="1499" y="279.5" width="11" height="2.800" rx="1.300" fill="#f2c21e" stroke="#b98a0a" stroke-width=".5"/><rect x="1509.500" y="289.1" width="11" height="2.800" rx="1.300" fill="#f2c21e" stroke="#b98a0a" stroke-width=".5"/><rect x="1509.500" y="285.90000000000003" width="11" height="2.800" rx="1.300" fill="#f2c21e" stroke="#b98a0a" stroke-width=".5"/><rect x="1509.500" y="282.70000000000005" width="11" height="2.800" rx="1.300" fill="#f2c21e" stroke="#b98a0a" stroke-width=".5"/><circle cx="1513.500" cy="277.500" r="5" fill="#f5c623" stroke="#c79410" stroke-width=".6"/><circle cx="1504" cy="274.300" r="5" fill="#5cb531"/><path d="M1501.500 274.500L1503.400 276.300 1506.500 272.500" fill="none" stroke="#fff" stroke-width="1.400"/></svg>
<div class="t b" style="left:1524.4px;top:276.0px;font-size:12px;color:#f4f4f4;letter-spacing:-0.13px;">Valid currency</div>
<div class="abs" style="left:1220px;top:313px;width:637px;height:34px;border:1px solid #2b2b2b;border-radius:4px;background:#fff;"></div>
<div class="t" style="left:1230.7px;top:322.7px;font-size:15.6px;color:#222;letter-spacing:0.07px;">7582f167a8bd490fa60d7ed112418a0c</div>
<div class="abs" style="left:1225px;top:367px;width:34px;height:32px;border:1px solid #2b2b2b;border-radius:4px;background:linear-gradient(#343434 0%,#424242 49%,#323232 51%,#272727 100%);"></div>
<div class="abs" style="left:1267px;top:367px;width:34px;height:32px;border:1px solid #1568cc;border-radius:4px;background:linear-gradient(#1b73d6 0%,#2e80de 49%,#1a70d5 51%,#0a62ca 100%);"></div>
<svg style="left:1235px;top:376.8px;" width="14" height="14.7" viewBox="0 0 14 14.700"><path d="M7 0L14 7.700H9.900V14.700H4.100V7.700H0z" fill="#a4a4a4"/></svg>
<div class="t" style="left:1267px;top:370px;width:34px;text-align:center;font-size:22px;font-weight:bold;color:#c9c9c9;line-height:29px;-webkit-text-stroke:.5px">Σ</div>
<div class="abs" style="left:1225px;top:432px;width:34px;height:32px;border:1px solid #1568cc;border-radius:4px;background:linear-gradient(#1b73d6 0%,#2e80de 49%,#1a70d5 51%,#0a62ca 100%);"></div>
<div class="abs" style="left:1267px;top:432px;width:34px;height:32px;border:1px solid #2b2b2b;border-radius:4px;background:linear-gradient(#343434 0%,#424242 49%,#323232 51%,#272727 100%);"></div>
<svg style="left:1235px;top:441.8px;" width="14" height="14.7" viewBox="0 0 14 14.700"><path d="M7 0L14 7.700H9.900V14.700H4.100V7.700H0z" fill="#a4a4a4"/></svg>
<div class="t" style="left:1267px;top:435px;width:34px;text-align:center;font-size:22px;font-weight:bold;color:#c9c9c9;line-height:29px;-webkit-text-stroke:.5px">Σ</div>
<div class="abs" style="left:1564px;top:368px;width:60px;height:30px;border-radius:15px;background:#262626;"></div><div class="abs" style="left:1568px;top:372px;width:23px;height:23px;border-radius:12px;background:linear-gradient(#3a3a3a 0%,#434343 49%,#383838 51%,#2c2c2c 100%);"></div><div class="t b" style="left:1600.0px;top:377.0px;font-size:13px;color:#f4f4f4;letter-spacing:-0.55px;">Off</div>
<div class="abs" style="left:1564px;top:433px;width:60px;height:30px;border-radius:15px;background:#262626;"></div><div class="abs" style="left:1568px;top:437px;width:23px;height:23px;border-radius:12px;background:linear-gradient(#3a3a3a 0%,#434343 49%,#383838 51%,#2c2c2c 100%);"></div><div class="t b" style="left:1600.0px;top:442.0px;font-size:13px;color:#f4f4f4;letter-spacing:-0.55px;">Off</div>
<div class="abs" style="left:1220px;top:492px;width:199px;height:34px;border:1px solid #2b2b2b;border-radius:4px;background:linear-gradient(#363636 0%,#424242 49%,#2f2f2f 51%,#262626 100%);"></div><div class="abs" style="left:1221px;top:493px;width:165px;height:32px;border-radius:3px 0 0 3px;background:#fff;"></div><div class="t" style="left:1230.6px;top:501.5px;font-size:16px;color:#222;letter-spacing:-0.37px;">RT Minutes</div><svg style="left:1397.5px;top:507.5px;" width="8" height="7" viewBox="0 0 8 7"><path d="M0 0H8L4 7z" fill="#fff"/></svg>
<div class="abs" style="left:1220px;top:543px;width:60px;height:30px;border-radius:15px;background:#262626;"></div><div class="abs" style="left:1224px;top:547px;width:23px;height:23px;border-radius:12px;background:linear-gradient(#3a3a3a 0%,#434343 49%,#383838 51%,#2c2c2c 100%);"></div><div class="t b" style="left:1256.0px;top:552.0px;font-size:13px;color:#f4f4f4;letter-spacing:-0.55px;">Off</div>
<div class="abs" style="left:1220px;top:592px;width:60px;height:30px;border-radius:15px;background:#262626;"></div><div class="abs" style="left:1253px;top:595px;width:24px;height:24px;border-radius:12px;background:linear-gradient(#5a9ce2 0%,#3f89da 49%,#1f77d6 51%,#0a66cc 100%);box-shadow:0 0 0 1px #1d1d1d;"></div><div class="t b" style="left:1228.3px;top:601.0px;font-size:13px;color:#f4f4f4;letter-spacing:-1.44px;">On</div>
<div class="abs" style="left:1220px;top:641px;width:60px;height:30px;border-radius:15px;background:#262626;"></div><div class="abs" style="left:1224px;top:645px;width:23px;height:23px;border-radius:12px;background:linear-gradient(#3a3a3a 0%,#434343 49%,#383838 51%,#2c2c2c 100%);"></div><div class="t b" style="left:1256.0px;top:650.0px;font-size:13px;color:#f4f4f4;letter-spacing:-0.55px;">Off</div>
<div class="abs" style="left:1220px;top:690px;width:60px;height:30px;border-radius:15px;background:#262626;"></div><div class="abs" style="left:1253px;top:693px;width:24px;height:24px;border-radius:12px;background:linear-gradient(#5a9ce2 0%,#3f89da 49%,#1f77d6 51%,#0a66cc 100%);box-shadow:0 0 0 1px #1d1d1d;"></div><div class="t b" style="left:1228.3px;top:699.0px;font-size:13px;color:#f4f4f4;letter-spacing:-1.44px;">On</div>
<div class="abs" style="left:1220px;top:739px;width:60px;height:30px;border-radius:15px;background:#262626;"></div><div class="abs" style="left:1224px;top:743px;width:23px;height:23px;border-radius:12px;background:linear-gradient(#3a3a3a 0%,#434343 49%,#383838 51%,#2c2c2c 100%);"></div><div class="t b" style="left:1256.0px;top:748.0px;font-size:13px;color:#f4f4f4;letter-spacing:-0.55px;">Off</div>
<div class="abs" style="left:1220px;top:788px;width:60px;height:30px;border-radius:15px;background:#262626;"></div><div class="abs" style="left:1253px;top:791px;width:24px;height:24px;border-radius:12px;background:linear-gradient(#5a9ce2 0%,#3f89da 49%,#1f77d6 51%,#0a66cc 100%);box-shadow:0 0 0 1px #1d1d1d;"></div><div class="t b" style="left:1228.3px;top:797.0px;font-size:13px;color:#f4f4f4;letter-spacing:-1.44px;">On</div>
<div class="abs" style="left:950px;top:774px;width:353px;height:57px;border:4px solid #22dd4a;border-radius:7px;"></div>
<div class="abs" style="left:955px;top:838px;width:907px;height:39px;background:linear-gradient(#3b3939 0%,#464444 49%,#2f2c2c 51%,#262222 100%);"></div>
<svg style="left:971px;top:843.5px;" width="33" height="32" viewBox="971 843.500 33 32"><path d="M971.500 873.500C972 867 977 864.500 983 863.500H990C996 864.500 1001 867 1001.500 873.500C994 876 979 876 971.500 873.500z" fill="#1b7ac8"/><path d="M982.500 858H990.500V864L986.500 868.500 982.500 864z" fill="#e9a86c"/><ellipse cx="986.500" cy="853.800" rx="7.300" ry="8.800" fill="#f3b67c"/><path d="M978.900 853.500C977.600 847 981 843.700 986.500 843.700S995.400 847 994.100 853.500C993 850 992 848.800 986.500 848.800S980 850 978.900 853.500z" fill="#0e0e0e"/><circle cx="995" cy="867" r="8" fill="#1b60da"/><circle cx="995" cy="862.800" r="1.300" fill="#fff"/><rect x="993.800" y="865.200" width="2.400" height="6.200" fill="#fff"/></svg>
<div class="t b" style="left:1007.9px;top:849.6px;font-size:16.5px;color:#fff;letter-spacing:-0.52px;font-weight:bold;">Salary settings</div>
<svg style="left:1845.5px;top:854px;" width="8" height="7" viewBox="0 0 8 7"><path d="M0 7L4 0 8 7z" fill="#fff"/></svg>
<div class="abs" style="left:1203px;top:886px;width:198px;height:34px;border:1px solid #2b2b2b;border-radius:4px;background:linear-gradient(#363636 0%,#424242 49%,#2f2f2f 51%,#262626 100%);"></div><div class="abs" style="left:1204px;top:887px;width:164px;height:32px;border-radius:3px 0 0 3px;background:#fff;"></div><div class="t" style="left:1213.6px;top:895.5px;font-size:16px;color:#222;letter-spacing:-0.24px;">Resource report</div><svg style="left:1379.5px;top:901.5px;" width="8" height="7" viewBox="0 0 8 7"><path d="M0 0H8L4 7z" fill="#fff"/></svg>
</body>
</html>
